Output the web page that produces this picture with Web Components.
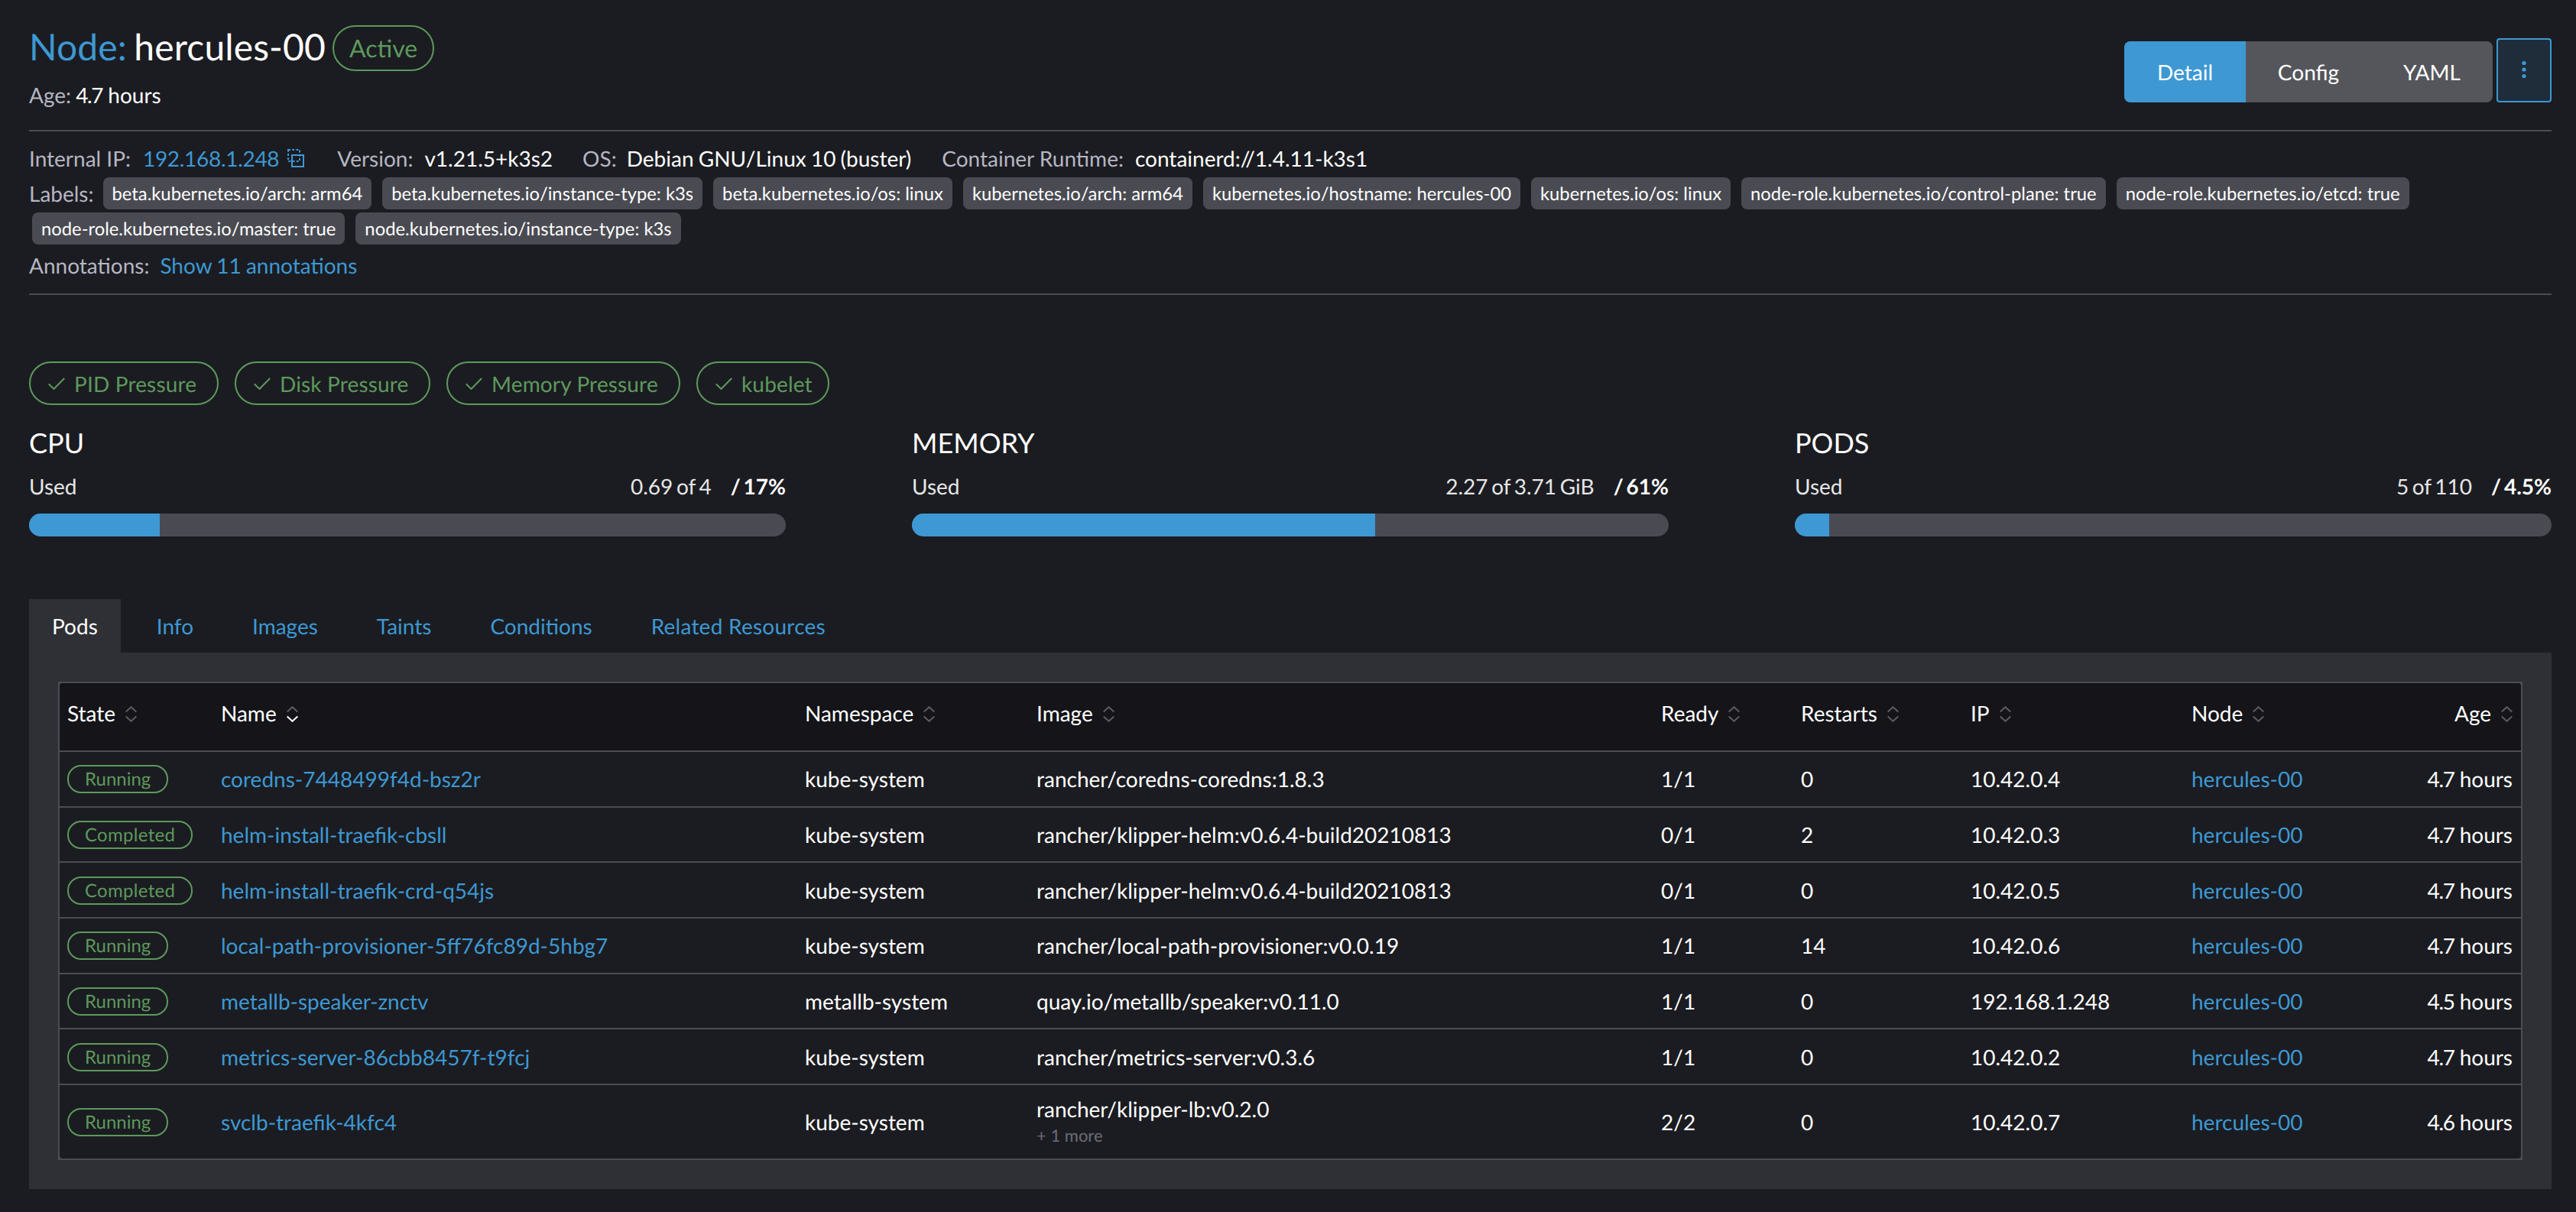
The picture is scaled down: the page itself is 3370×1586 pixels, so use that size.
<!DOCTYPE html>
<html lang="en">
<head>
<meta charset="utf-8">
<title>Node: hercules-00</title>
<style>
  html, body { margin: 0; padding: 0; background: #1b1c21; }
  body {
    font-family: Lato, "Noto Sans", sans-serif; font-size: 28px; line-height: 40px;
    color: #e6e6e6; text-rendering: geometricPrecision; width: 3370px; height: 1586px; overflow: hidden;
  }
</style>
</head>
<body>
<node-page>
  <node-header slot="header" name="hercules-00" state="Active" age="4.7 hours"></node-header>
  <node-meta slot="meta">
    <label-chip>beta.kubernetes.io/arch: arm64</label-chip>
    <label-chip>beta.kubernetes.io/instance-type: k3s</label-chip>
    <label-chip>beta.kubernetes.io/os: linux</label-chip>
    <label-chip>kubernetes.io/arch: arm64</label-chip>
    <label-chip>kubernetes.io/hostname: hercules-00</label-chip>
    <label-chip>kubernetes.io/os: linux</label-chip>
    <label-chip>node-role.kubernetes.io/control-plane: true</label-chip>
    <label-chip>node-role.kubernetes.io/etcd: true</label-chip>
    <label-chip>node-role.kubernetes.io/master: true</label-chip>
    <label-chip>node.kubernetes.io/instance-type: k3s</label-chip>
  </node-meta>
  <status-pill slot="status" style="width:248px">PID Pressure</status-pill>
  <status-pill slot="status" style="width:256px">Disk Pressure</status-pill>
  <status-pill slot="status" style="width:306px">Memory Pressure</status-pill>
  <status-pill slot="status" style="width:174px">kubelet</status-pill>
  <usage-gauge slot="gauges" title="CPU" amount="0.69 of 4" pct="17" fill="17.25"></usage-gauge>
  <usage-gauge slot="gauges" title="MEMORY" amount="2.27 of 3.71 GiB" pct="61" fill="61.2"></usage-gauge>
  <usage-gauge slot="gauges" title="PODS" amount="5 of 110" pct="4.5" fill="4.55"></usage-gauge>
  <tab-strip slot="tabs"></tab-strip>
  <pods-table slot="panel"></pods-table>
</node-page>

<script>
const shadow = (el, html) => { el.attachShadow({ mode: 'open' }).innerHTML = html; };
const tight = (t) => t.replace(/^(\d\.\d)/, '<span style="letter-spacing:-1.4px">$1</span>');

class NodePage extends HTMLElement {
  connectedCallback() {
    shadow(this, `<style>
      :host { display: block; padding: 0 32px 0 38px; }
      .status { display: flex; gap: 21px; margin-top: 87px; }
      .gauges { display: flex; gap: 165px; margin-top: 29px; }
      .tabs { margin-top: 82px; }
      .panel { background: #2f3035; padding: 38px; }
    </style>
    <slot name="header"></slot>
    <slot name="meta"></slot>
    <div class="status"><slot name="status"></slot></div>
    <div class="gauges"><slot name="gauges"></slot></div>
    <div class="tabs"><slot name="tabs"></slot></div>
    <div class="panel"><slot name="panel"></slot></div>`);
  }
}

class NodeHeader extends HTMLElement {
  connectedCallback() {
    shadow(this, `<style>
      :host { display: flex; justify-content: space-between; height: 170px; padding-top: 30px; box-sizing: border-box; }
      .left { display: flex; flex-direction: column; }
      .title { display: flex; align-items: flex-start; }
      h1 { margin: 2px 0 0; font-size: 48px; line-height: 60px; font-weight: 400; color: #fff; word-spacing: -3px; letter-spacing: .12px; }
      h1 span { color: #3d98d3; }
      .badge { margin: 3px 0 0 9px; height: 60px; box-sizing: border-box; border: 2px solid #5d995d; border-radius: 30px;
        color: #5d995d; font-size: 32px; line-height: 56px; padding: 0 20px; }
      .age { margin-top: 11px; color: #b6b6c2; word-spacing: -1px; }
      .age b { font-weight: 400; color: #fff; word-spacing: 0; }
      .right { display: flex; align-items: flex-start; gap: 5px; padding-top: 20px; }
      .group { display: flex; margin-top: 4px; height: 80px; border-radius: 8px; overflow: hidden; background: #55565b; }
      .group span { line-height: 80px; color: #fff; text-align: center; }
      .group .on { background: #3d98d3; }
      .kebab { width: 72px; height: 84px; box-sizing: border-box; border: 2px solid #3d98d3; border-radius: 4px; background: #1f2d3b;
        display: flex; align-items: center; justify-content: center; }
      .kebab svg { margin-top: -2px; }
    </style>
    <div class="left">
      <div class="title"><h1><span>Node:</span> ${this.getAttribute('name')}</h1><div class="badge">${this.getAttribute('state')}</div></div>
      <div class="age">Age: <b>${tight(this.getAttribute('age'))}</b></div>
    </div>
    <div class="right">
      <div class="group"><span class="on" style="width:159px">Detail</span><span style="width:164px">Config</span><span style="width:159px">YAML</span></div>
      <div class="kebab"><svg width="6" height="24" viewBox="0 0 6 24"><circle cx="3" cy="3.5" r="2.6" fill="#3d98d3"/><circle cx="3" cy="12" r="2.6" fill="#3d98d3"/><circle cx="3" cy="20.5" r="2.6" fill="#3d98d3"/></svg></div>
    </div>`);
  }
}

class NodeMeta extends HTMLElement {
  connectedCallback() {
    shadow(this, `<style>
      :host { display: block; border-top: 2px solid #4b4c54; border-bottom: 2px solid #4b4c54; padding: 15px 0 17px; }
      .info { display: flex; height: 40px; }
      .item { margin-right: 42px; display: flex; white-space: pre; }
      .k { color: #b6b6c2; margin-right: 16px; }
      .v { color: #fff; }
      a { color: #3d98d3; text-decoration: none; }
      .copy { margin: 8px 0 0 11px; align-self: flex-start; }
      .labels { display: flex; flex-wrap: wrap; row-gap: 4px; margin-top: 5px; }
      .labels .k { line-height: 42px; margin-right: 8px; }
      .ann { display: flex; margin-top: 7px; }
      .ann .k { margin-right: 14px; }
      .ann a { word-spacing: -1px; }
    </style>
    <div class="info">
      <div class="item"><span class="k">Internal IP:</span><a style="letter-spacing:-.3px">192.168.1.248</a>
        <svg class="copy" width="23" height="24" viewBox="0 0 23 24" fill="none" stroke="#3d98d3" stroke-width="2">
          <rect x="1" y="1" width="15" height="15" stroke-dasharray="3 2.2"/><rect x="6" y="8" width="15" height="15"/></svg></div>
      <div class="item" style="margin-right:39px"><span class="k" style="margin-right:15px">Version:</span><span class="v">v1.21.5+k3s2</span></div>
      <div class="item" style="margin-right:40px"><span class="k" style="margin-right:13px">OS:</span><span class="v" style="word-spacing:-1px">Debian GNU/Linux 10 (buster)</span></div>
      <div class="item"><span class="k" style="margin-right:15px">Container Runtime:</span><span class="v">containerd://1.4.11-k3s1</span></div>
    </div>
    <div class="labels"><span class="k">Labels:</span><slot></slot></div>
    <div class="ann"><span class="k">Annotations:</span><a>Show 11 annotations</a></div>`);
  }
}

class LabelChip extends HTMLElement {
  connectedCallback() {
    shadow(this, `<style>
      :host { display: block; height: 42px; margin: 0 10px 0 4px; padding: 0 12px; background: #4a4b52; border-radius: 8px;
        font-size: 23.8px; line-height: 44px; color: #fff; white-space: nowrap; }
    </style><slot></slot>`);
  }
}

class StatusPill extends HTMLElement {
  connectedCallback() {
    shadow(this, `<style>
      :host { display: flex; align-items: center; height: 57px; box-sizing: border-box; border: 2px solid #5d995d; border-radius: 29px;
        color: #5d995d; padding: 0 0 0 23px; white-space: nowrap; letter-spacing: .15px; }
      svg { margin-right: 12px; }
    </style><svg width="22" height="16" viewBox="0 0 22 16" fill="none" stroke="#5d995d" stroke-width="2"><path d="M.8 8.5 7.5 15 21.2 1"/></svg><slot></slot>`);
  }
}

class UsageGauge extends HTMLElement {
  connectedCallback() {
    const pct = this.getAttribute('pct');
    shadow(this, `<style>
      :host { display: block; width: 990px; }
      h3 { margin: 0; font-size: 36px; line-height: 40px; font-weight: 400; color: #fff; }
      .row { display: flex; justify-content: space-between; margin-top: 17px; color: #e6e6e6; }
      .amt { word-spacing: -2.5px; }
      b { color: #fff; margin-left: 25px; word-spacing: -3px; }
      .bar { margin-top: 16px; height: 30px; border-radius: 15px; background: #4a4b52; overflow: hidden; }
      .fill { height: 100%; background: #3d98d3; }
    </style>
    <h3>${this.getAttribute('title')}</h3>
    <div class="row"><span>Used</span><span class="amt">${this.getAttribute('amount')}<b>/ ${pct}%</b></span></div>
    <div class="bar"><div class="fill" style="width:${this.getAttribute('fill')}%"></div></div>`);
  }
}

class TabStrip extends HTMLElement {
  connectedCallback() {
    const tabs = ['Pods', 'Info', 'Images', 'Taints', 'Conditions', 'Related Resources'];
    shadow(this, `<style>
      :host { display: flex; height: 70px; }
      span { padding: 0 30px; line-height: 70px; margin-right: 17px; color: #3d98d3; }
      span:last-child { letter-spacing: .25px; }
      .on { background: #2f3035; color: #fff; }
    </style>${tabs.map((t, i) => `<span class="${i ? '' : 'on'}">${t}</span>`).join('')}`);
  }
}

const sortIcon = (active) => `<svg class="sort" width="15" height="21" viewBox="0 0 15 21" fill="none" stroke-width="2">
  <path d="M.7 7.6 7.5 1.2l6.8 6.4" stroke="#5a5b61"/>
  <path d="M.7 13.4l6.8 6.4 6.8-6.4" stroke="${active ? '#ffffff' : '#5a5b61'}"/></svg>`;

class PodsTable extends HTMLElement {
  connectedCallback() {
    const heads = ['State', 'Name', 'Namespace', 'Image', 'Ready', 'Restarts', 'IP', 'Node', 'Age'];
    const n = 'hercules-00', k = 'kube-system';
    const rows = [
      ['Running', 'coredns-7448499f4d-bsz2r', k, 'rancher/coredns-coredns:1.8.3', '1/1', '0', '10.42.0.4', '4.7 hours'],
      ['Completed', 'helm-install-traefik-cbsll', k, 'rancher/klipper-helm:v0.6.4-build20210813', '0/1', '2', '10.42.0.3', '4.7 hours'],
      ['Completed', 'helm-install-traefik-crd-q54js', k, 'rancher/klipper-helm:v0.6.4-build20210813', '0/1', '0', '10.42.0.5', '4.7 hours'],
      ['Running', 'local-path-provisioner-5ff76fc89d-5hbg7', k, 'rancher/local-path-provisioner:v0.0.19', '1/1', '14', '10.42.0.6', '4.7 hours'],
      ['Running', 'metallb-speaker-znctv', 'metallb-system', 'quay.io/metallb/speaker:v0.11.0', '1/1', '0', '192.168.1.248', '4.5 hours'],
      ['Running', 'metrics-server-86cbb8457f-t9fcj', k, 'rancher/metrics-server:v0.3.6', '1/1', '0', '10.42.0.2', '4.7 hours'],
      ['Running', 'svclb-traefik-4kfc4', k, 'rancher/klipper-lb:v0.2.0', '2/2', '0', '10.42.0.7', '4.6 hours', '+ 1 more'],
    ];
    shadow(this, `<style>
      :host { display: block; border: 2px solid #4b4c54; background: #4b4c54; color: #fff; }
      .inner { border-radius: 4px; overflow: hidden; background: #1b1c21; }
      .row { display: grid; grid-template-columns: 201px 764px 303px 817px 183px 222px 289px 241px 200px; align-items: center; box-sizing: border-box; }
      .cell { padding: 0 11px 0 10px; white-space: nowrap; min-width: 0; }
      .head { height: 90px; background: #141419; border-bottom: 2px solid #4b4c54; padding-bottom: 10px; }
      .head .cell { display: flex; align-items: center; gap: 13px; }
      .sort { flex: none; margin-top: 2px; }
      .body { height: 72.67px; border-bottom: 2px solid #4b4c54; }
      .body.last { height: 96px; border-bottom: 0; }
      .right { justify-content: flex-end; text-align: right; }
      a { color: #3d98d3; }
      .pill { display: block; width: fit-content; height: 37px; margin-top: 1px; box-sizing: border-box; border: 2px solid #5d995d; border-radius: 18px; color: #5d995d;
        font-size: 24px; line-height: 33px; padding: 0 21px; }
      .pill.Completed { letter-spacing: .3px; }
      .more { display: block; font-size: 22px; line-height: 30px; color: #6c6c76; }
      .stack { padding-bottom: 4px; }
    </style>
    <div class="inner">
      <div class="row head">${heads.map((h, i) => `<div class="cell ${i === 8 ? 'right' : ''}"><span>${h}</span>${sortIcon(i === 1)}</div>`).join('')}</div>
      ${rows.map((r, i) => `<div class="row body ${i === 6 ? 'last' : ''}">
        <div class="cell"><span class="pill ${r[0]}">${r[0]}</span></div>
        <div class="cell"><a>${r[1]}</a></div>
        <div class="cell">${r[2]}</div>
        <div class="cell ${r[8] ? 'stack' : ''}">${r[3]}${r[8] ? `<span class="more">${r[8]}</span>` : ''}</div>
        <div class="cell">${r[4]}</div>
        <div class="cell">${r[5]}</div>
        <div class="cell">${r[6]}</div>
        <div class="cell"><a>${n}</a></div>
        <div class="cell right">${tight(r[7])}</div>
      </div>`).join('')}
    </div>`);
  }
}

customElements.define('node-page', NodePage);
customElements.define('node-header', NodeHeader);
customElements.define('node-meta', NodeMeta);
customElements.define('label-chip', LabelChip);
customElements.define('status-pill', StatusPill);
customElements.define('usage-gauge', UsageGauge);
customElements.define('tab-strip', TabStrip);
customElements.define('pods-table', PodsTable);
</script>
</body>
</html>
